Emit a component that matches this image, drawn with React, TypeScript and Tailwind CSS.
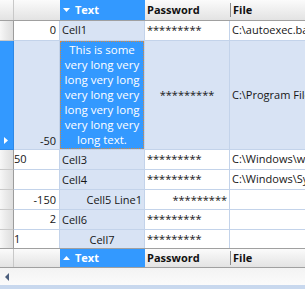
import React from 'react';

// grid look of a WinForms data grid: sorted "Text" column, focused row -50
const GRID = 'border-[#c3d3ea]';
const LIGHT = 'bg-[#d8e3f4]';

const DownArrow = () => (
  <svg width="7" height="4" viewBox="0 0 7 4" className="shrink-0">
    <path d="M0 0h7L3.5 4z" fill="#ffffff" />
  </svg>
);

const UpArrow = () => (
  <svg width="7" height="4" viewBox="0 0 7 4" className="shrink-0">
    <path d="M0 4h7L3.5 0z" fill="#ffffff" />
  </svg>
);

const Indicator = ({ active, className = '' }: { active?: boolean; className?: string }) =>
  active ? (
    <div className={`flex w-[14px] shrink-0 items-end justify-start border-r border-b border-[#2d88e6] bg-[#3399ff] pb-[5px] pl-[4px] ${className}`}>
      <svg width="4" height="7" viewBox="0 0 4 7">
        <path d="M0 0v7l4-3.5z" fill="#ffffff" />
      </svg>
    </div>
  ) : (
    <div
      className={`w-[14px] shrink-0 border-r border-b border-r-[#9c9c9c] border-b-[#c9c9c9] bg-gradient-to-r from-[#f7f7f7] via-[#e9e9e9] to-[#dedede] ${className}`}
    />
  );

const HeaderBar = ({ footer }: { footer?: boolean }) => (
  <div
    className={`flex shrink-0 border-[#a0a0a0] font-bold ${
      footer ? 'h-[20px] border-t border-b' : 'h-[21px] border-b'
    }`}
  >
    <div className="w-[14px] shrink-0 border-r border-[#c8c8c8] bg-gradient-to-b from-[#fbfbfb] to-[#e3e3e3]" />
    <div className="w-[46px] shrink-0 bg-gradient-to-b from-[#fbfbfb] to-[#e3e3e3]" />
    <div className="flex w-[85px] shrink-0 items-center gap-[5px] bg-[#3399ff] pl-[3px] text-white">
      {footer ? <UpArrow /> : <DownArrow />}
      <span>Text</span>
    </div>
    <div className="flex w-[85px] shrink-0 items-center bg-gradient-to-b from-[#fbfbfb] to-[#e3e3e3] pl-[2px] text-[#111]">
      Password
    </div>
    <div className="flex min-w-0 flex-1 items-center bg-gradient-to-b from-[#fbfbfb] to-[#e3e3e3] text-[#111]">
      <div className="h-[14px] w-px self-center bg-[#8c8c8c]" />
      <span className="pl-[2px]">File</span>
    </div>
  </div>
);

type Row = {
  num: string;
  numAlign: 'left' | 'right';
  text: string;
  textAlign: 'left' | 'center' | 'right';
  pwAlign: 'left' | 'right';
  file: string;
  h: string;
  twoLine?: boolean;
  noBorder?: boolean;
};

const rows: Row[] = [
  { num: '50', numAlign: 'left', text: 'Cell3', textAlign: 'left', pwAlign: 'left', file: 'C:\\Windows\\win.ini', h: 'h-[20px]' },
  { num: '', numAlign: 'right', text: 'Cell4', textAlign: 'left', pwAlign: 'left', file: 'C:\\Windows\\System32', h: 'h-[20px]' },
  { num: '-150', numAlign: 'right', text: 'Cell5 Line1', textAlign: 'right', pwAlign: 'right', file: '', h: 'h-[20px]', twoLine: true },
  { num: '2', numAlign: 'right', text: 'Cell6', textAlign: 'left', pwAlign: 'left', file: '', h: 'h-[20px]' },
  { num: '1', numAlign: 'left', text: 'Cell7', textAlign: 'center', pwAlign: 'left', file: '', h: 'h-[18px]', noBorder: true },
];

const GridRow = ({ r }: { r: Row }) => {
  const b = r.noBorder ? '' : `border-b ${GRID}`;
  const align = r.twoLine ? 'items-start pt-[2px]' : 'items-center';
  return (
    <div className={`flex ${r.h} shrink-0 overflow-hidden`}>
      <Indicator className={r.noBorder ? 'border-b-0' : ''} />
      <div
        className={`flex w-[46px] shrink-0 ${align} border-r ${GRID} ${b} bg-white ${
          r.numAlign === 'left' ? 'justify-start' : 'justify-end pr-[3px]'
        }`}
      >
        {r.num}
      </div>
      <div
        className={`flex w-[85px] shrink-0 flex-col overflow-hidden border-r ${GRID} ${b} ${LIGHT} ${
          r.twoLine ? 'justify-start pt-[2px]' : 'justify-center'
        } ${r.textAlign === 'left' ? 'items-start pl-[2px]' : r.textAlign === 'center' ? 'items-center' : 'items-end pr-[2px]'}`}
      >
        <span className="leading-[15px]">{r.text}</span>
        {r.twoLine && <span className="leading-[15px]">Cell5 Line2</span>}
      </div>
      <div
        className={`flex w-[85px] shrink-0 ${align} border-r ${GRID} ${b} bg-white ${
          r.pwAlign === 'left' ? 'justify-start pl-[2px]' : 'justify-end pr-[2px]'
        }`}
      >
        *********
      </div>
      <div className={`flex min-w-0 flex-1 items-center overflow-hidden whitespace-nowrap ${b} bg-white pl-[2px]`}>{r.file}</div>
    </div>
  );
};

export default function App() {
  return (
    <div className="flex h-[289px] w-[305px] flex-col overflow-hidden bg-white font-['Open_Sans',sans-serif] text-[11px] text-[#161616]">
      <HeaderBar />

      {/* row 0 */}
      <div className="flex h-[20px] shrink-0">
        <Indicator />
        <div className={`flex w-[46px] shrink-0 items-center justify-end border-r border-b ${GRID} bg-white pr-[3px]`}>0</div>
        <div className={`flex w-[85px] shrink-0 items-center border-r border-b ${GRID} ${LIGHT} pl-[2px]`}>Cell1</div>
        <div className={`flex w-[85px] shrink-0 items-center border-r border-b ${GRID} bg-white pl-[2px]`}>*********</div>
        <div className={`flex min-w-0 flex-1 items-center overflow-hidden whitespace-nowrap border-b ${GRID} bg-white pl-[2px]`}>
          C:\autoexec.bat
        </div>
      </div>

      {/* focused row */}
      <div className="flex h-[109px] shrink-0">
        <Indicator active />
        <div className={`flex w-[46px] shrink-0 items-end justify-end border-r border-b ${GRID} ${LIGHT} pr-[3px] pb-[1px]`}>
          <span className="leading-[15px]">-50</span>
        </div>
        <div className={`relative flex w-[85px] shrink-0 justify-center border-r border-b ${GRID} bg-[#3399ff] px-[2px] pt-[1px] text-center text-[11.5px] text-white`}>
          <span className="leading-[15px]">
            This is some very long very long very long very long very long very long very long very long text.
          </span>
          <div className="pointer-events-none absolute inset-0 border border-dotted border-[#d9893a]" />
        </div>
        <div className={`flex w-[85px] shrink-0 items-center justify-center border-r border-b ${GRID} ${LIGHT}`}>*********</div>
        <div className={`flex min-w-0 flex-1 items-center overflow-hidden whitespace-nowrap border-b ${GRID} ${LIGHT} pl-[2px]`}>
          C:\Program Files
        </div>
      </div>

      {rows.map((r) => (
        <GridRow key={r.text} r={r} />
      ))}

      <HeaderBar footer />

      {/* horizontal scroll bar */}
      <div className="flex h-[17px] shrink-0 items-center bg-gradient-to-b from-[#f3f3f3] to-[#fbfbfb] pl-[5px]">
        <svg width="4" height="8" viewBox="0 0 4 8">
          <path d="M4 0v8L0 4z" fill="#4c5f7d" />
        </svg>
      </div>
      <div className="h-[4px] shrink-0 bg-[#c8d8ee]" />
    </div>
  );
}
